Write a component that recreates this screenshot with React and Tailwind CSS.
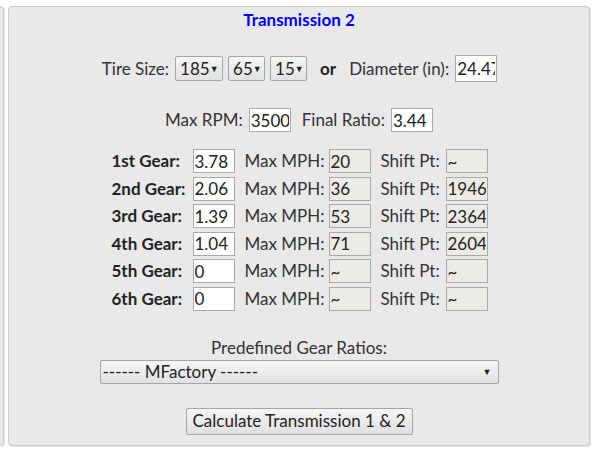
import React from 'react';

const gears = [
  { label: '1st Gear:', ratio: '3.78', mph: '20', shift: '~' },
  { label: '2nd Gear:', ratio: '2.06', mph: '36', shift: '1946' },
  { label: '3rd Gear:', ratio: '1.39', mph: '53', shift: '2364' },
  { label: '4th Gear:', ratio: '1.04', mph: '71', shift: '2604' },
  { label: '5th Gear:', ratio: '0', mph: '~', shift: '~' },
  { label: '6th Gear:', ratio: '0', mph: '~', shift: '~' },
];

function Box({ value, readOnly = false, tall = false }) {
  return (
    <input
      readOnly
      value={value}
      className={`w-[42px] shrink-0 ${tall ? 'h-[27px]' : 'h-[24px]'} border border-[#a9a9a9] px-[1px] text-[17px] text-[#222] outline-none ${
        readOnly ? 'bg-[#ecebe6]' : 'bg-white'
      }`}
    />
  );
}

function Dropdown({ value, width }) {
  return (
    <div
      className={`${width} flex h-[25px] items-center justify-between rounded-[2px] border border-[#a6a6a6] bg-gradient-to-b from-[#f6f6f6] to-[#e2e2e2] pl-[4px] pr-[4px] text-[17px] text-[#222]`}
    >
      <span>{value}</span>
      <span className="text-[9px]">▼</span>
    </div>
  );
}

export default function App() {
  return (
    <div className="h-[455px] w-[599px] whitespace-nowrap bg-white font-['Lato','Noto_Sans',sans-serif] text-[17px] leading-[20px] text-[#333]">
      <div className="flex h-full items-start pt-[6px]">
        {/* edge of the neighbouring panel */}
        <div className="h-[440px] w-[4px] rounded-r-[4px] border border-l-0 border-[#c9c9c9] bg-[#e9e9e9] shadow-[1px_1px_1px_rgba(0,0,0,0.1)]" />
        <div className="ml-[4px] flex h-[440px] w-[582px] flex-col items-center rounded-[4px] border border-[#c9c9c9] bg-[#e9e9e9] shadow-[1px_1px_1px_rgba(0,0,0,0.12)]">
          <div className="mt-[3px] h-[20px] text-[17px] font-bold text-[#0000ee]">Transmission 2</div>

          <div className="mt-[25px] flex h-[27px] items-center pl-[1px]">
            <span>Tire Size:</span>
            <div className="ml-[6px] flex gap-[5px]">
              <Dropdown value="185" width="w-[48px]" />
              <Dropdown value="65" width="w-[37px]" />
              <Dropdown value="15" width="w-[37px]" />
            </div>
            <span className="ml-[13px] font-bold text-[#222]">or</span>
            <span className="ml-[13px]">Diameter (in):</span>
            <div className="ml-[6px] h-[27px]">
              <Box value="24.47" tall />
            </div>
          </div>

          <div className="mt-[26px] flex h-[24px] items-center">
            <span>Max RPM:</span>
            <div className="ml-[6px] h-[24px]">
              <Box value="3500" />
            </div>
            <span className="ml-[11px]">Final Ratio:</span>
            <div className="ml-[6px] h-[24px]">
              <Box value="3.44" />
            </div>
          </div>

          <div className="mt-[17px] flex flex-col gap-y-[3.6px] pl-[1px]">
            {gears.map((g) => (
              <div key={g.label} className="flex h-[24px] items-center">
                <span className="w-[81px] font-bold text-[#222]">{g.label}</span>
                <Box value={g.ratio} />
                <span className="ml-[10px] w-[84px]">Max MPH:</span>
                <Box value={g.mph} readOnly />
                <span className="ml-[10px] w-[65px]">Shift Pt:</span>
                <Box value={g.shift} readOnly />
              </div>
            ))}
          </div>

          <div className="mt-[27px] h-[20px]">Predefined Gear Ratios:</div>
          <div className="mt-[2px] flex h-[24px] w-[399px] items-center justify-between rounded-[2px] border border-[#a6a6a6] bg-gradient-to-b from-[#f6f6f6] to-[#e2e2e2] pl-[2px] pr-[6px] text-[17px] text-[#222]">
            <span>------ MFactory ------</span>
            <span className="text-[9px]">▼</span>
          </div>

          <button className="mt-[24px] h-[27px] w-[227px] rounded-[2px] border border-[#a6a6a6] bg-gradient-to-b from-[#f6f6f6] to-[#e0e0e0] text-[17px] text-[#222]">
            Calculate Transmission 1 &amp; 2
          </button>
        </div>
      </div>
    </div>
  );
}
